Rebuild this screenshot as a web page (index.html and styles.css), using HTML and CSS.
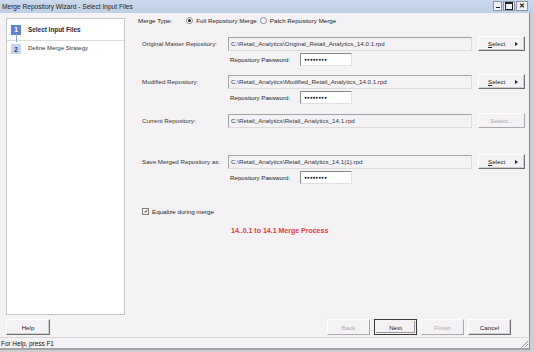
FILE: index.html
```html
<!DOCTYPE html>
<html lang="en">
<head>
    <meta charset="UTF-8">
    <title>Merge Repository Wizard - Select Input Files</title>
    <link rel="stylesheet" href="styles.css">
</head>
<body>

    <div class="titlebar">
        <span class="title">Merge Repository Wizard - Select Input Files</span>
        <div class="controls">
            <span class="ctl ctl-min"><i></i></span>
            <span class="ctl ctl-max"><i></i></span>
            <span class="ctl ctl-close">&#x2715;</span>
        </div>
    </div>

    <div class="client">
        <div class="main">
            <div class="steps">
                <div class="step step-active">
                    <span class="badge">1</span>
                    <span>Select Input Files</span>
                </div>
                <div class="step">
                    <span class="badge badge-next">2</span>
                    <span>Define Merge Strategy</span>
                </div>
            </div>

            <div class="content">
                <div class="merge-type">
                    <span class="mt-label">Merge Type:</span>
                    <span class="radio checked"></span><span>Full Repository Merge</span>
                    <span class="radio"></span><span>Patch Repository Merge</span>
                </div>

                <div class="repo repo-1">
                    <label>Original Master Repository:</label>
                    <div class="path">C:\Retail_Analytics\Original_Retail_Analytics_14.0.1.rpd</div>
                    <button class="btn select"><span><u>S</u>elect</span><span class="arrow"></span></button>
                    <div class="pwd"><span>Repository Password:</span><span class="pwd-box">&#x25CF;&#x25CF;&#x25CF;&#x25CF;&#x25CF;&#x25CF;&#x25CF;&#x25CF;</span></div>
                </div>

                <div class="repo repo-2">
                    <label>Modified Repository:</label>
                    <div class="path">C:\Retail_Analytics\Modified_Retail_Analytics_14.0.1.rpd</div>
                    <button class="btn select"><span><u>S</u>elect</span><span class="arrow"></span></button>
                    <div class="pwd"><span>Repository Password:</span><span class="pwd-box">&#x25CF;&#x25CF;&#x25CF;&#x25CF;&#x25CF;&#x25CF;&#x25CF;&#x25CF;</span></div>
                </div>

                <div class="repo repo-3">
                    <label>Current Repository:</label>
                    <div class="path">C:\Retail_Analytics\Retail_Analytics_14.1.rpd</div>
                    <button class="btn select disabled">Select...</button>
                </div>

                <div class="repo repo-4">
                    <label>Save Merged Repository as:</label>
                    <div class="path">C:\Retail_Analytics\Retail_Analytics_14.1(1).rpd</div>
                    <button class="btn select"><span><u>S</u>elect</span><span class="arrow"></span></button>
                    <div class="pwd"><span>Repository Password:</span><span class="pwd-box">&#x25CF;&#x25CF;&#x25CF;&#x25CF;&#x25CF;&#x25CF;&#x25CF;&#x25CF;</span></div>
                </div>

                <div class="equalize">
                    <span class="checkbox">&#x2714;</span>
                    <span>Equalize during merge</span>
                </div>

                <div class="note">14..0.1 to 14.1 Merge Process</div>
            </div>
        </div>

        <div class="buttons">
            <button class="btn wide">Help</button>
            <div class="nav">
                <button class="btn wide disabled">Back</button>
                <button class="btn wide default">Next</button>
                <button class="btn wide disabled">Finish</button>
                <button class="btn wide">Cancel</button>
            </div>
        </div>

        <div class="status">
            <span>For Help, press F1</span>
            <span class="grip"></span>
        </div>
    </div>

</body>
</html>
```

FILE: styles.css
```css
body {
    margin: 0;
    width: 534px;
    height: 352px;
    overflow: hidden;
    background: #cfcfd3;
    font-family: "Liberation Sans", Arial, sans-serif;
    font-size: 6.2px;
    color: #222;
}

.titlebar {
    height: 13px;
    display: flex;
    align-items: center;
    justify-content: space-between;
    background: linear-gradient(#cbd9ec, #bfd0e6);
    padding-left: 2px;
}

.title {
    font-size: 6.6px;
    color: #1c1c1c;
}

.controls {
    display: flex;
    gap: 1px;
    margin-right: 6px;
    align-self: flex-start;
    margin-top: 1px;
}

.ctl {
    height: 10px;
    background: #eef1f6;
    border: 1px solid #8b97a8;
    box-sizing: border-box;
    display: flex;
    align-items: center;
    justify-content: center;
}

.ctl-min { width: 9px; align-items: flex-end; }
.ctl-min i { width: 4px; height: 1px; background: #222; margin-bottom: 2px; }
.ctl-max { width: 12px; }
.ctl-max i { width: 6px; height: 5px; border: 1px solid #222; border-top-width: 2px; }
.ctl-close { width: 12px; font-size: 7px; font-weight: bold; color: #111; }

.client {
    width: 529px;
    height: 337px;
    background: #f5f2f5;
    border-right: 1px solid #8c8c8c;
    display: flex;
    flex-direction: column;
}

.main {
    flex: 1;
    display: flex;
}

.steps {
    width: 119px;
    height: 297px;
    margin: 5px 0 0 6px;
    background: #fff;
    border: 1px solid #c6c6c6;
    box-sizing: border-box;
}

.step {
    display: flex;
    align-items: center;
    gap: 7px;
    height: 13px;
    padding-left: 4px;
    font-size: 6px;
    color: #333;
}

.step-active {
    height: 21px;
    font-weight: bold;
    font-size: 6.4px;
    color: #1a2a4a;
    border-bottom: 1px solid #dcdcdc;
    position: relative;
}

.step-active::after {
    content: "";
    position: absolute;
    left: 9px;
    top: 15px;
    width: 1px;
    height: 8px;
    background: #8fa9d6;
}

.badge {
    width: 10px;
    height: 10px;
    background: #5e86cc;
    color: #fff;
    font-weight: bold;
    font-size: 6.4px;
    display: flex;
    align-items: center;
    justify-content: center;
}

.badge-next {
    background: #c3d5ef;
    color: #1d3b78;
    margin-top: 3px;
}

.content {
    flex: 1;
    padding: 2px 0 0 13px;
}

.merge-type {
    display: flex;
    align-items: center;
    height: 10px;
}

.mt-label { margin-right: 11px; }

.radio {
    width: 5px;
    height: 5px;
    border: 1px solid #8a8a8a;
    border-radius: 50%;
    background: #fff;
    margin-right: 3px;
    margin-left: 3px;
    position: relative;
}

.radio.checked::after {
    content: "";
    position: absolute;
    left: 1px;
    top: 1px;
    width: 3px;
    height: 3px;
    border-radius: 50%;
    background: #222;
}

.repo {
    display: grid;
    grid-template-columns: 84px 244px 47px;
    column-gap: 6px;
    row-gap: 2px;
    align-items: center;
}

.repo label { padding-left: 4px; color: #333; }

.repo-1 { margin-top: 11px; }
.repo-2 { margin-top: 8px; }
.repo-3 { margin-top: 9px; }
.repo-4 { margin-top: 26px; }

.path {
    height: 14px;
    box-sizing: border-box;
    border: 1px solid #a5a5a5;
    border-right-color: #dcdcdc;
    border-bottom-color: #dcdcdc;
    padding-left: 2px;
    display: flex;
    align-items: center;
    color: #333;
}

.pwd {
    grid-column: 2;
    display: flex;
    align-items: center;
    gap: 10px;
    padding-left: 2px;
}

.pwd-box {
    width: 52px;
    height: 13px;
    box-sizing: border-box;
    background: #fff;
    border: 1px solid #8a8a8a;
    border-right-color: #e0e0e0;
    border-bottom-color: #e0e0e0;
    display: flex;
    align-items: center;
    padding-left: 3px;
    font-size: 4.4px;
    letter-spacing: 0.2px;
    color: #111;
}

.btn {
    font-family: inherit;
    font-size: 6.2px;
    color: #222;
    background: #f5f2f5;
    border: 1px solid;
    border-color: #ffffff #6f6f6f #6f6f6f #ffffff;
    box-shadow: inset -1px -1px 0 #cfcfcf;
    padding: 0;
    height: 16px;
}

.select {
    height: 15px;
    display: flex;
    align-items: center;
    justify-content: space-between;
    padding: 0 6px 0 9px;
}

.arrow {
    width: 0;
    height: 0;
    border-left: 3px solid #222;
    border-top: 2.5px solid transparent;
    border-bottom: 2.5px solid transparent;
}

.btn.disabled {
    color: #a9a9a9;
    border-color: #ffffff #a9a9a9 #a9a9a9 #ffffff;
    box-shadow: none;
}

.select.disabled {
    justify-content: center;
    padding: 0;
}

.equalize {
    display: flex;
    align-items: center;
    gap: 3px;
    margin-top: 24px;
    padding-left: 4px;
}

.checkbox {
    width: 7px;
    height: 7px;
    box-sizing: border-box;
    border: 1px solid #7c7c7c;
    background: #fff;
    font-size: 5px;
    line-height: 5px;
    text-align: center;
    color: #222;
}

.note {
    margin: 12px 0 0 93px;
    font-size: 7px;
    font-weight: bold;
    color: #e03a40;
}

.buttons {
    display: flex;
    justify-content: space-between;
    padding: 4px 18px 2px 6px;
}

.nav {
    display: flex;
    gap: 4px;
}

.wide { width: 44px; }
.nav .wide { width: 43px; }

.btn.default {
    border: 1px solid #3a3a3a;
    box-shadow: inset 0 0 0 1px #f5f2f5, inset -1px -1px 0 1px #9a9a9a;
}

.status {
    height: 13px;
    border-top: 1px solid #d6d6d6;
    display: flex;
    align-items: center;
    justify-content: space-between;
    padding-left: 1px;
    font-size: 6.4px;
    color: #111;
    margin-top: auto;
    border-bottom: 2px solid #a6a6a8;
}

.grip {
    width: 6px;
    height: 6px;
    align-self: flex-end;
    margin: 0 1px 1px 0;
    background: linear-gradient(135deg, transparent 45%, #9a9a9a 45%, #9a9a9a 55%, transparent 55%, transparent 70%, #9a9a9a 70%, #9a9a9a 80%, transparent 80%);
}
```
